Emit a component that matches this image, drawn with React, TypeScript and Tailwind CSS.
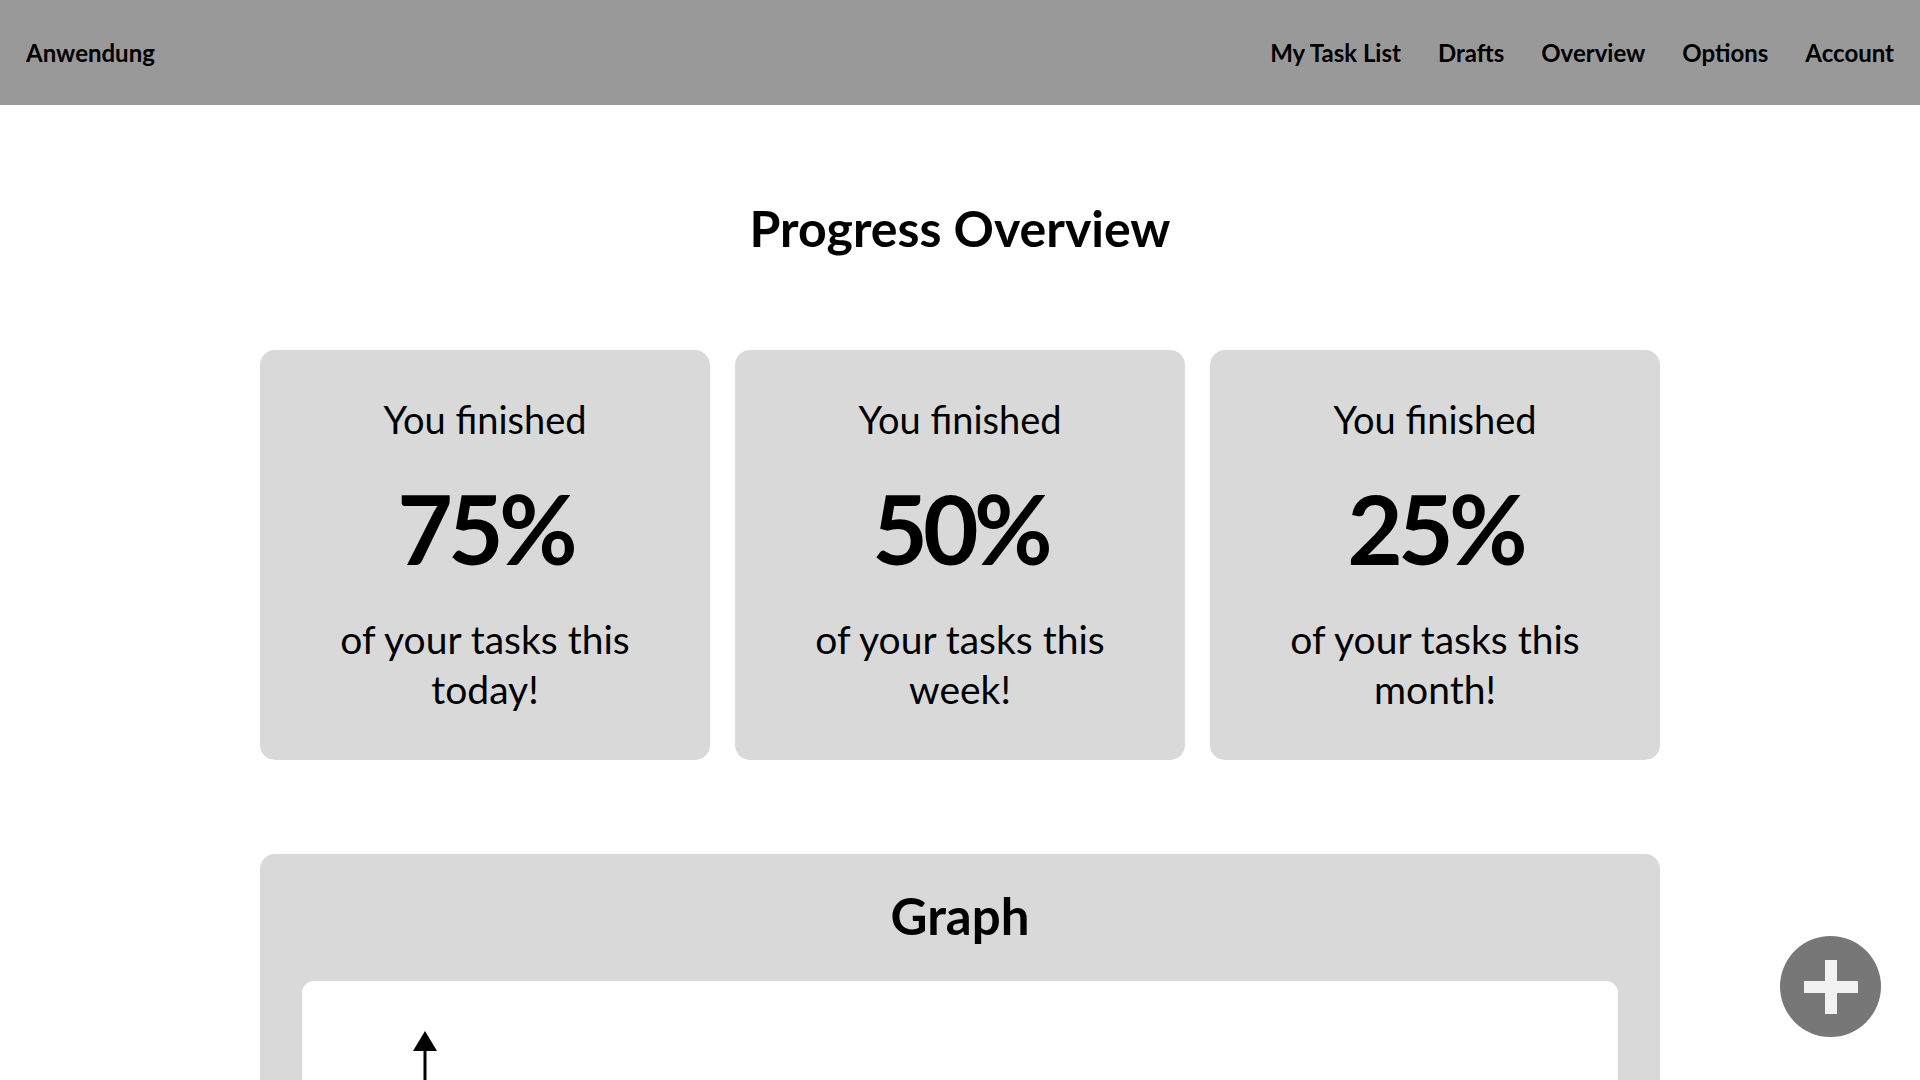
import React from "react";

const navItems = ["My Task List", "Drafts", "Overview", "Options", "Account"];

const stats = [
  { value: "75%", period: "today!" },
  { value: "50%", period: "week!" },
  { value: "25%", period: "month!" },
];

function StatCard({ value, period }: { value: string; period: string }) {
  return (
    <div className="flex flex-col items-center rounded-[15px] bg-[#d9d9d9] pt-[46px] pb-[46px] text-center text-black">
      <p className="text-[38px] leading-[46px] font-normal">You finished</p>
      <p className="mt-[28px] text-[96px] leading-[115px] font-bold tracking-[-0.05em]">{value}</p>
      <p className="mt-[29px] text-[39px] leading-[50px] font-normal">
        of your tasks this
        <br />
        {period}
      </p>
    </div>
  );
}

export default function App() {
  return (
    <div
      className="min-h-screen bg-white text-black"
      style={{ fontFamily: "Lato, 'Noto Sans', sans-serif" }}
    >
      <header className="flex h-[105px] items-center justify-between bg-[#999999] pl-[26px] pr-[26px]">
        <span className="text-[24px] leading-[28px] font-bold">Anwendung</span>
        <nav className="flex items-center gap-[37px]">
          {navItems.map((item) => (
            <a key={item} href="#" className="text-[24px] leading-[28px] font-bold">
              {item}
            </a>
          ))}
        </nav>
      </header>

      <main className="mx-auto w-[1400px] pt-[93px] pb-[80px]">
        <h1 className="text-center text-[50px] leading-[60px] font-bold">Progress Overview</h1>

        <div className="mt-[92px] grid grid-cols-3 gap-[25px]">
          {stats.map((s) => (
            <StatCard key={s.value} value={s.value} period={s.period} />
          ))}
        </div>

        <section className="mt-[94px] rounded-[15px] bg-[#d9d9d9] px-[42px] pt-[32px] pb-[42px]">
          <h2 className="text-center text-[51px] leading-[60px] font-bold">Graph</h2>
          <div className="mt-[35px] h-[520px] rounded-[12px] bg-white pl-[111px] pt-[50px]">
            {/* y-axis arrow of the chart */}
            <svg width="24" height="420" viewBox="0 0 24 420" className="block">
              <polygon points="12,0 0,20 24,20" fill="#000" />
              <rect x="10.5" y="18" width="3" height="402" fill="#000" />
            </svg>
          </div>
        </section>
      </main>

      <button
        type="button"
        className="fixed right-[39px] bottom-[43px] flex h-[101px] w-[101px] items-center justify-center rounded-full bg-[#777777]"
        aria-label="Add task"
      >
        <svg width="54" height="54" viewBox="0 0 54 54">
          <rect x="21" y="0" width="12" height="54" fill="#f2f2f2" />
          <rect x="0" y="21" width="54" height="12" fill="#f2f2f2" />
        </svg>
      </button>
    </div>
  );
}
